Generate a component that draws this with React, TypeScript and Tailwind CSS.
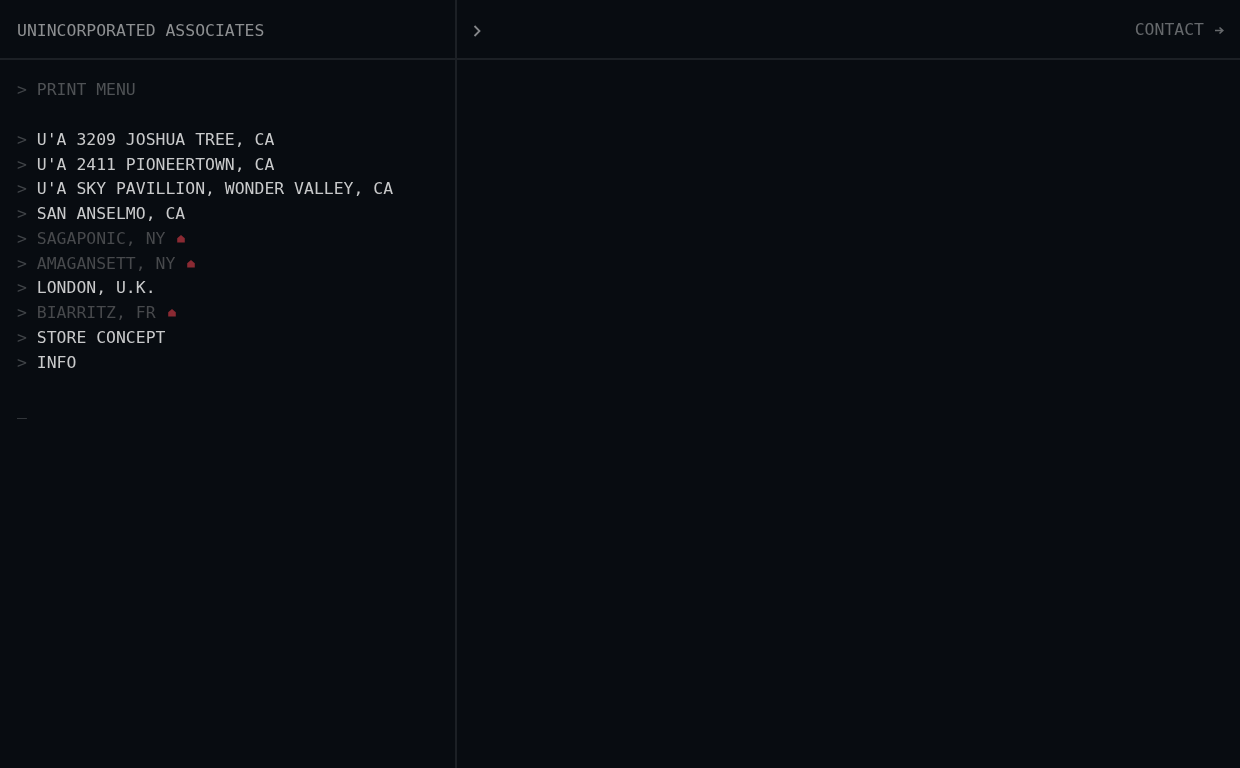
const locations = [
  { label: "U'A 3209 JOSHUA TREE, CA" },
  { label: "U'A 2411 PIONEERTOWN, CA" },
  { label: "U'A SKY PAVILLION, WONDER VALLEY, CA" },
  { label: "SAN ANSELMO, CA" },
  { label: "SAGAPONIC, NY", closed: true },
  { label: "AMAGANSETT, NY", closed: true },
  { label: "LONDON, U.K." },
  { label: "BIARRITZ, FR", closed: true },
  { label: "STORE CONCEPT" },
  { label: "INFO" },
];

function Dot() {
  return (
    <svg viewBox="0 0 10 10" className="ml-[11px] h-[10px] w-[10px] text-[#8a2a33]">
      <path d="M5 1 L8.8 4.2 V8.6 H1.2 V4.2 Z" fill="currentColor" />
    </svg>
  );
}

function Row({ label, closed }: { label: string; closed?: boolean }) {
  return (
    <li className="flex h-[24.75px] items-center">
      <span className="w-[19.8px] text-[#404448]">&gt;</span>
      <span className={closed ? "text-[#47494c]" : "text-[#c9cacb]"}>{label}</span>
      {closed && <Dot />}
    </li>
  );
}

export default function App() {
  return (
    <div className="h-[768px] w-[1240px] overflow-hidden bg-[#080c11] font-['DejaVu_Sans_Mono',monospace] text-[16.45px] leading-[24.75px] blur-[0.5px]">
      <header className="flex h-[60px] border-b-2 border-[#1c2025]">
        <div className="flex w-[457px] items-center border-r-2 border-[#1c2025] pl-[17px] pt-[5px] text-[#8d8f91]">
          UNINCORPORATED ASSOCIATES
        </div>
        <div className="flex flex-1 items-center justify-between pl-[16px] pr-[16px] pt-[3px] text-[#66696c]">
          <svg viewBox="0 0 8 12" className="h-[12px] w-[8px] text-[#85878a]">
            <path d="M1.5 1 L6.5 6 L1.5 11" fill="none" stroke="currentColor" strokeWidth="1.8" />
          </svg>
          <span className="flex items-center gap-[11px]">
            CONTACT
            <svg viewBox="0 0 9 9" className="h-[9px] w-[9px]">
              <path d="M0 4.5 H7 M4.5 1.5 L7.8 4.5 L4.5 7.5" fill="none" stroke="currentColor" strokeWidth="1.6" />
            </svg>
          </span>
        </div>
      </header>
      <div className="flex h-[708px]">
        <nav className="w-[457px] border-r-2 border-[#1c2025] pl-[17px] pt-[18.3px]">
          <div className="flex h-[24.75px] items-center">
            <span className="w-[19.8px] text-[#404448]">&gt;</span>
            <span className="text-[#4f5255]">PRINT MENU</span>
          </div>
          <ul className="mt-[24.75px]">
            {locations.map((l) => (
              <Row key={l.label} label={l.label} closed={l.closed} />
            ))}
          </ul>
          <div className="mt-[22.75px] text-[#4a4e52]">_</div>
        </nav>
        <main className="flex-1" />
      </div>
    </div>
  );
}
